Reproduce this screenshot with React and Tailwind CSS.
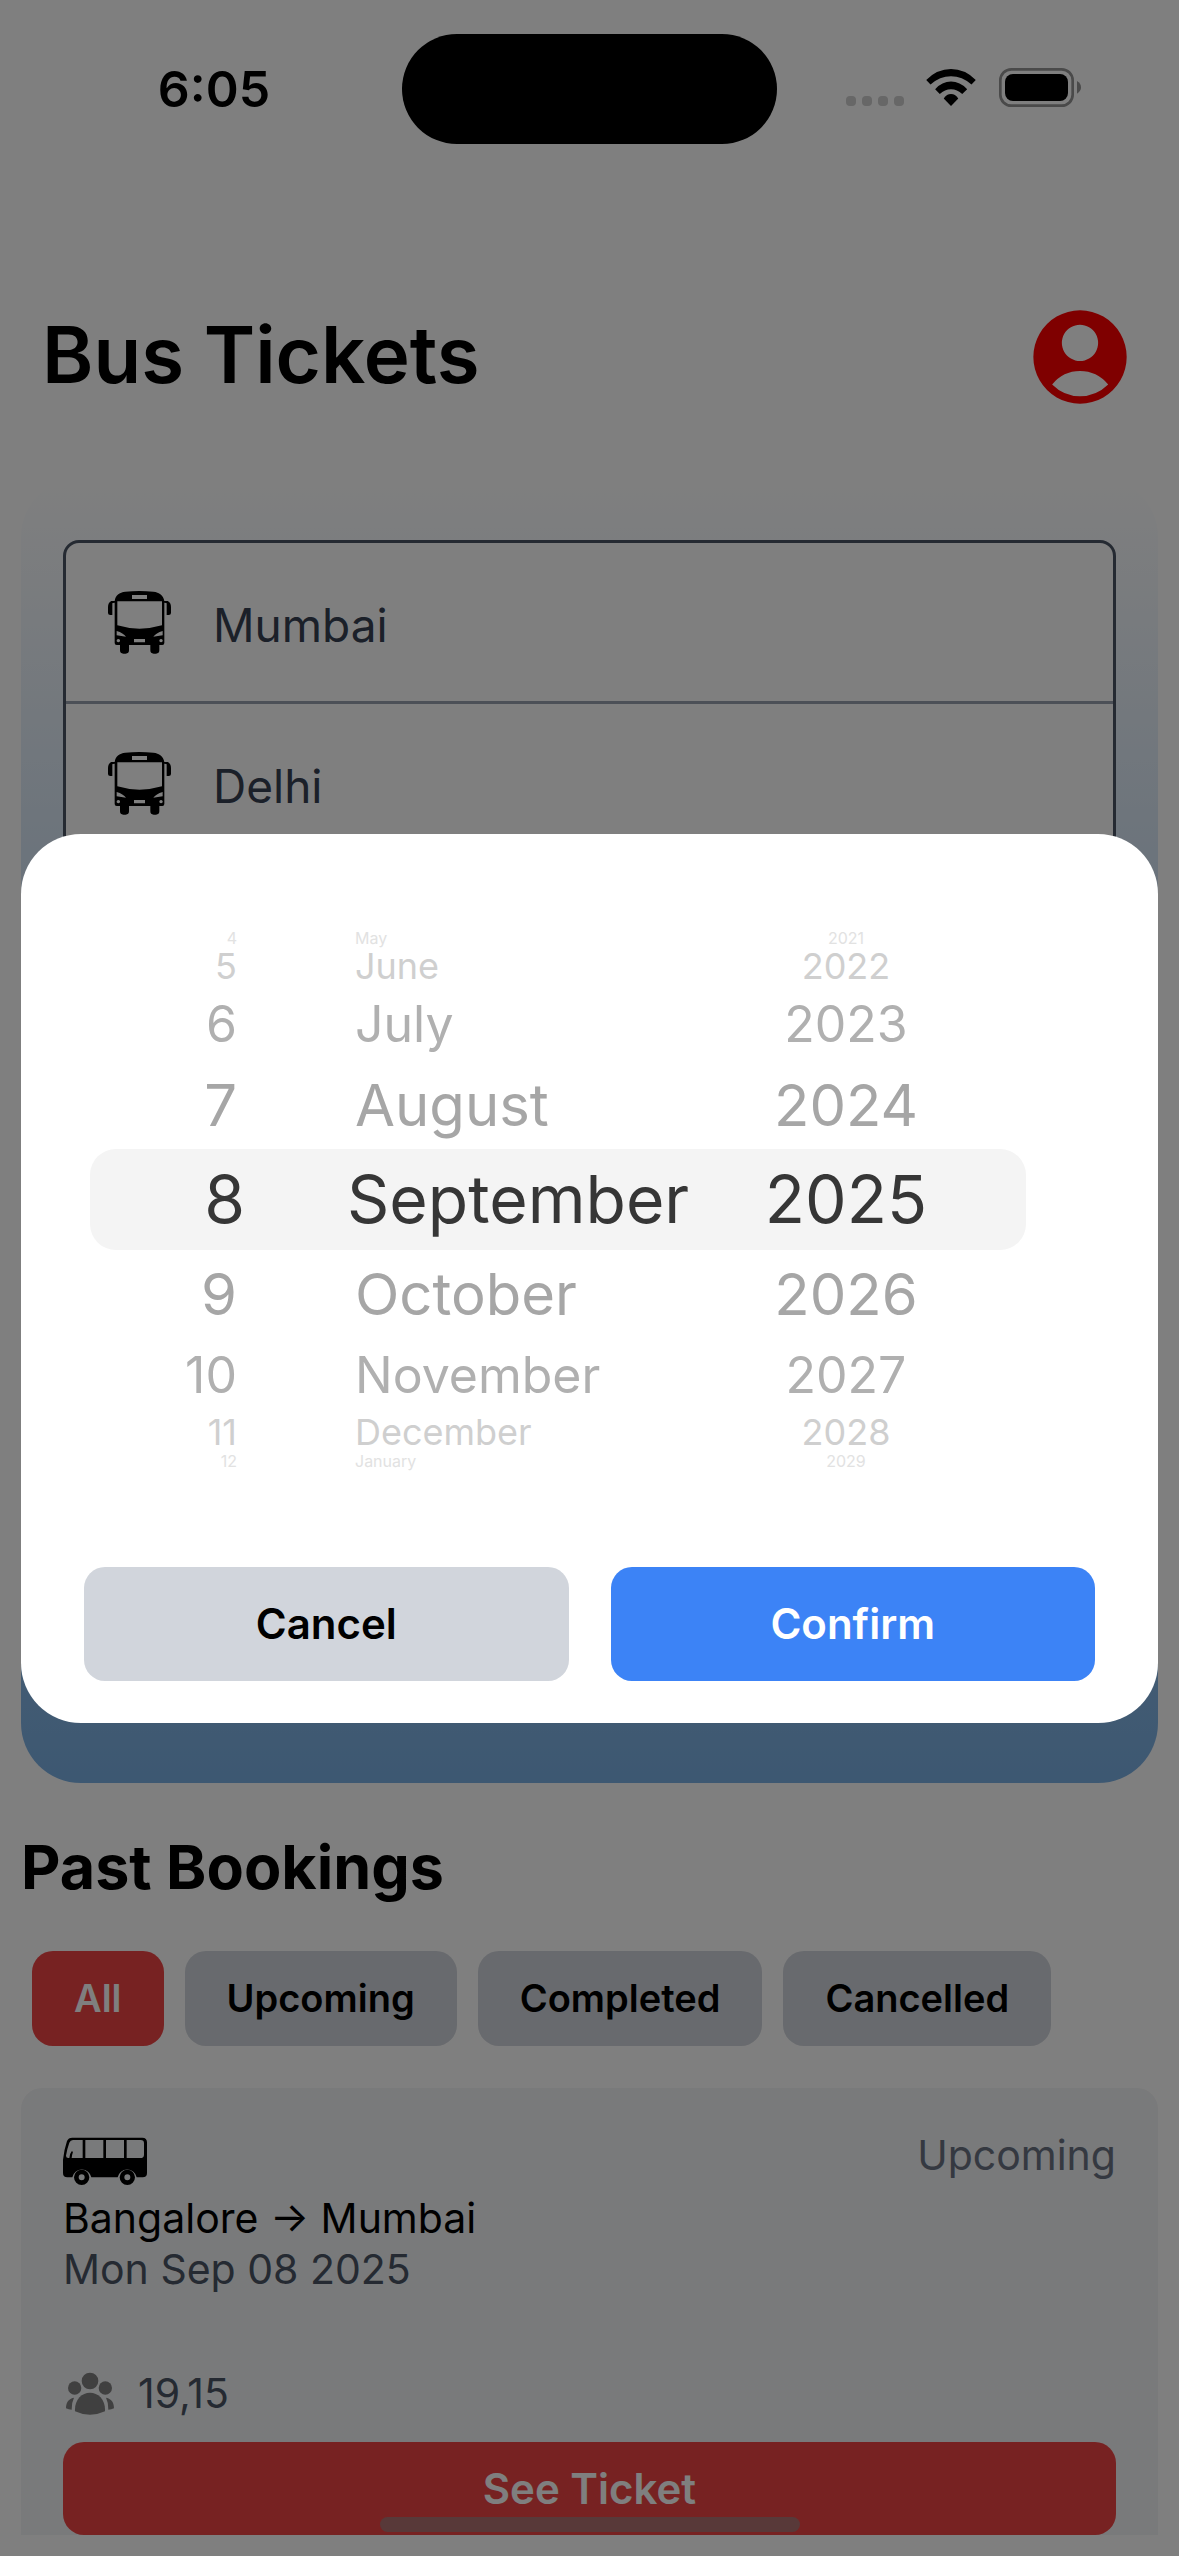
const DAYS = ["4", "5", "6", "7", "8", "9", "10", "11", "12"];
const MONTHS = ["May", "June", "July", "August", "September", "October", "November", "December", "January"];
const YEARS = ["2021", "2022", "2023", "2024", "2025", "2026", "2027", "2028", "2029"];

// Rows shrink and fade with their distance from the selected one.
const ROW_STYLES = [
  "h-[101px] text-[66px] text-[#363636] bg-[#f4f4f4]",
  "h-[88px] text-[58px] text-[#a6a6a6]",
  "h-[74px] text-[50px] text-[#b0b0b0]",
  "h-[41px] text-[36px] text-[#cfcfcf]",
  "h-[16px] text-[16px] text-[#e2e2e2]",
];
const SELECTED = 4;

function WheelColumn({ label, values, cellClass, selectedClass }) {
  return (
    <div role="listbox" aria-label={label} className="flex min-w-0 flex-col">
      {values.map((value, i) => (
        <button
          key={value}
          type="button"
          role="option"
          aria-selected={i === SELECTED}
          className={`flex items-center whitespace-nowrap leading-none ${ROW_STYLES[Math.abs(i - SELECTED)]} ${i === SELECTED ? selectedClass : cellClass}`}
        >
          {value}
        </button>
      ))}
    </div>
  );
}

function BusFront() {
  return (
    <svg viewBox="24 27 189 189" className="size-[63px] shrink-0" aria-hidden="true">
      <path
        fillRule="evenodd"
        d="M44 57 C46 40 58 31 76 29 Q118 25 160 29 C178 31 190 40 193 57 L203 57 Q213 62 213 75 L213 93 Q213 99 206 99 L200 99 L200 64 Q200 62 193 62 L193 183 Q193 189 187 189 L178 189 L178 205 Q178 215 168 215 L161 215 Q151 215 151 205 L151 189 L87 189 L87 205 Q87 215 77 215 L70 215 Q60 215 60 205 L60 189 L50 189 Q44 189 44 183 L44 62 Q37 62 37 64 L37 99 L31 99 Q24 99 24 93 L24 75 Q24 62 34 57 Z M96 39 L96 51 L141 51 L141 39 Z M52 58 L52 130 Q118 150 186 130 L186 58 Z M50 147 L50 160 L78 164 Q70 153 50 147 Z M188 147 Q168 153 160 164 L188 160 Z M102 171 L102 181 L135 181 L135 171 Z M55 171 a5 5 0 1 0 0.1 0 Z M183 171 a5 5 0 1 0 0.1 0 Z"
      />
    </svg>
  );
}

function BusSide() {
  return (
    <svg viewBox="24 45 252 189" className="h-[63px] w-[84px]" aria-hidden="true">
      <path
        fillRule="evenodd"
        d="M52 68 L262 68 Q276 68 276 82 L276 174 Q276 187 263 187 L245 187 A29 29 0 0 0 188 187 L109 187 A29 29 0 0 0 52 187 L37 187 Q24 187 24 174 L24 134 Q27 105 36 78 Q40 68 52 68 Z M54 75 Q46 75 43 83 Q36 102 33 122 Q33 129 40 129 L43 129 Q43 118 50 109 L54 110 Q51 119 50 129 L83 129 L83 75 Z M91 75 L91 129 L145 129 L145 75 Z M153 75 L153 129 L207 129 L207 75 Z M215 75 L215 129 L256 129 Q267 129 267 119 L267 85 Q267 75 257 75 Z"
      />
      <circle cx="80" cy="187" r="16" fill="none" stroke="black" strokeWidth="14" />
      <circle cx="217" cy="187" r="16" fill="none" stroke="black" strokeWidth="14" />
    </svg>
  );
}

function People() {
  return (
    <svg viewBox="33 54 144 132" className="h-[44px] w-12" fill="#808080" aria-hidden="true">
      <circle cx="105" cy="81" r="25" />
      <circle cx="59" cy="102" r="20" />
      <circle cx="151" cy="102" r="20" />
      <path d="M60 172 C58 137 80 116 105 116 C130 116 152 137 150 172 Q105 193 60 172 Z" />
      <path d="M57 131 C39 134 33 148 33 163 Q41 167 50 167 Q49 147 57 131 Z" />
      <path d="M153 131 C171 134 177 148 177 163 Q169 167 160 167 Q161 147 153 131 Z" />
    </svg>
  );
}

function StatusBar() {
  return (
    <header className="grid grid-cols-[1fr_375px_1fr] items-center pt-[34px]">
      <time className="pl-[26px] text-center text-[50px] font-semibold leading-none">6:05</time>
      <div className="h-[110px] rounded-full bg-black" />
      <div className="flex items-center pb-1 pl-[69px]">
        <div className="flex gap-1.5 pt-[27px]">
          {[0, 1, 2, 3].map((n) => (
            <span key={n} className="size-2.5 rounded-[4px] bg-[#cecece]" />
          ))}
        </div>
        <svg viewBox="0 0 150 112" className="ml-[22px] h-[37px] w-[50px]" aria-label="Wi-Fi">
          <path d="M0 33 Q33 0 75 0 Q117 0 150 33 L137 47 Q109 22 75 22 Q41 22 13 47 Z" />
          <path d="M27 61 Q48 38 75 38 Q102 38 124 61 L109 76 Q94 61 75 61 Q56 61 41 76 Z" />
          <path d="M53 89 Q62 76 75 76 Q88 76 97 89 L75 112 Z" />
        </svg>
        <svg viewBox="0 0 246 117" className="ml-[23px] h-[39px] w-[82px]" aria-label="Battery full">
          <rect x="4" y="4" width="217" height="109" rx="33" fill="none" stroke="#949494" strokeWidth="8" />
          <rect x="18" y="18" width="189" height="81" rx="24" />
          <path d="M234 39 Q246 46 246 58 Q246 70 234 77 Z" fill="#949494" />
        </svg>
      </div>
    </header>
  );
}

const FILTERS = ["All", "Upcoming", "Completed", "Cancelled"];

export default function App() {
  return (
    <div className="relative min-h-screen bg-white pb-[21px] font-['Inter',sans-serif] text-black">
      <StatusBar />

      <div className="flex items-center justify-between pl-[42px] pr-[52px] pt-[166px]">
        <h1 className="pb-1 text-[78px] font-semibold leading-[90px]">Bus Tickets</h1>
        <button type="button" aria-label="Profile">
          <svg viewBox="0 0 280 280" className="size-[94px]" aria-hidden="true">
            <path
              fill="#ff0000"
              fillRule="evenodd"
              d="M140 1 a139 139 0 1 0 0.1 0 Z M140 44 a54 54 0 1 1 -0.1 0 Z M57 222 Q90 182 140 182 Q190 182 224 222 Q188 257 140 257 Q92 257 57 222 Z"
            />
          </svg>
        </button>
      </div>

      <main className="px-[21px] pt-[73px]">
        <section className="min-h-[1306px] rounded-[60px] bg-linear-to-b from-white to-[#7ab0e4] px-[42px] pt-[63px]">
          <div className="overflow-hidden rounded-[16px] border-[3px] border-gray-600 bg-white">
            {["Mumbai", "Delhi"].map((city) => (
              <button
                key={city}
                type="button"
                className="flex w-full items-center gap-[42px] border-b-[3px] border-gray-400 px-[42px] text-left"
              >
                <BusFront />
                <span className="pb-[52px] pt-[58px] text-[46px] leading-[48px] text-gray-700">{city}</span>
              </button>
            ))}
            <div className="h-[158px]" />
          </div>
        </section>

        <h2 className="mt-12 text-[61px] font-bold leading-[72px]">Past Bookings</h2>

        <div className="mt-12 flex gap-[21px] px-[11px]">
          {FILTERS.map((f) => (
            <button
              key={f}
              type="button"
              className={`rounded-[21px] px-[42px] py-[21px] text-[38px] font-semibold leading-[53px] ${f === "All" ? "bg-[#ef4444] text-white" : "bg-gray-300"}`}
            >
              {f}
            </button>
          ))}
        </div>

        <article className="mt-[42px] rounded-t-[21px] bg-gray-100 px-[42px] pt-[42px] text-[41px] leading-[51px]">
          <div className="flex items-start justify-between">
            <div>
              <BusSide />
              <p>Bangalore → Mumbai</p>
              <p className="text-gray-600">Mon Sep 08 2025</p>
            </div>
            <span className="text-gray-500">Upcoming</span>
          </div>
          <div className="mt-[73px] flex items-center gap-6 pl-[3px] text-gray-600">
            <People />
            <span>19,15</span>
          </div>
          <button
            type="button"
            className="mt-[23px] w-full rounded-[21px] bg-[#ef4444] py-[21px] text-center text-[42px] font-semibold text-white"
          >
            See Ticket
          </button>
        </article>
      </main>

      <div className="absolute bottom-6 left-1/2 h-[15px] w-[420px] -translate-x-1/2 rounded-full bg-[#b07272]" />

      <div className="fixed inset-0 flex items-center justify-center bg-black/50 px-[21px]">
        <div
          role="dialog"
          aria-modal="true"
          aria-label="Select date"
          className="w-full rounded-[60px] bg-white px-[63px] pb-[42px] pt-24"
        >
          <div className="ml-1.5 mr-[69px] grid grid-cols-[155fr_519fr_262fr]">
            <WheelColumn label="Day" values={DAYS} cellClass="justify-end pr-2" selectedClass="justify-end rounded-l-[26px]" />
            <WheelColumn label="Month" values={MONTHS} cellClass="pl-[110px]" selectedClass="pl-[102px]" />
            <WheelColumn
              label="Year"
              values={YEARS}
              cellClass="justify-center pr-[98px]"
              selectedClass="justify-center rounded-r-[26px] pr-[98px]"
            />
          </div>
          <div className="mt-[98px] flex gap-[42px] text-[42px] font-semibold leading-[50px]">
            <button type="button" className="flex-1 rounded-[21px] bg-gray-300 py-8">Cancel</button>
            <button type="button" className="flex-1 rounded-[21px] bg-[#3c83f6] py-8 text-white">Confirm</button>
          </div>
        </div>
      </div>
    </div>
  );
}
